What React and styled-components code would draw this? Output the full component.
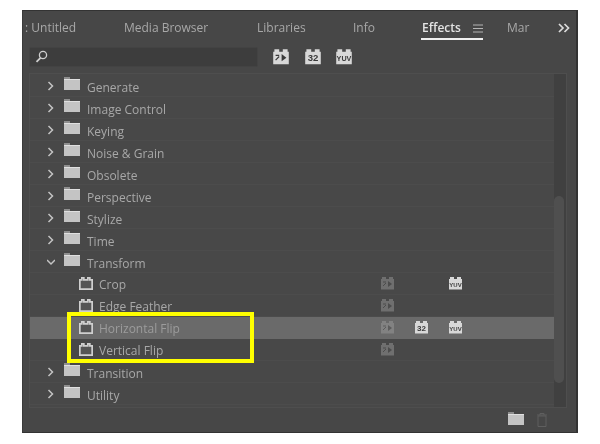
import React from "react";
import styled, { createGlobalStyle } from "styled-components";

const GlobalStyle = createGlobalStyle`
  html, body {
    margin: 0;
    height: 100%;
    background: #fff;
  }
  body {
    font-family: "Open Sans", "Noto Sans", sans-serif;
    -webkit-font-smoothing: antialiased;
  }
  * { box-sizing: border-box; }
`;

const Page = styled.div`
  width: 600px;
  height: 444px;
  padding: 10px 22px 11px 22px;
`;

const Panel = styled.div`
  position: relative;
  width: 556px;
  height: 423px;
  background: #474747;
  border-top: 1px solid #333;
  border-left: 1px solid #3a3a3a;
  border-right: 2px solid #333;
  border-bottom: 1px solid #333;
  display: flex;
  flex-direction: column;
`;

const Blur = styled.div`
  display: flex;
  flex-direction: column;
  flex: 1;
  min-height: 0;
  filter: blur(0.4px);
`;

const Tabs = styled.div`
  display: flex;
  height: 30px;
  align-items: center;
  position: relative;
  font-size: 12px;
`;

const Tab = styled.div`
  position: absolute;
  left: ${(p) => p.$x}px;
  top: 9px;
  line-height: 16px;
  white-space: nowrap;
  color: ${(p) => (p.$active ? "#e4e4e4" : "#a8a8a8")};
  font-weight: ${(p) => (p.$active ? 600 : 400)};
`;

const Underline = styled.div`
  position: absolute;
  left: 398px;
  top: 27px;
  width: 62px;
  height: 2px;
  background: #f0f0f0;
`;

const MenuBars = styled.svg`
  position: absolute;
  left: 450px;
  top: 13px;
`;

const More = styled.svg`
  position: absolute;
  left: 535px;
  top: 12px;
`;

const SearchRow = styled.div`
  display: flex;
  align-items: center;
  gap: 14px;
  height: 20px;
  margin: 6px 0 0 6px;
`;

const SearchBox = styled.div`
  width: 229px;
  height: 20px;
  background: #3d3d3d;
  border: 1px solid #434343;
  border-radius: 2px;
  display: flex;
  align-items: center;
  padding-left: 5px;
`;

const BadgeRow = styled.div`
  display: flex;
  gap: 13.5px;
`;

const ListBox = styled.div`
  display: flex;
  margin: 6px 9px 0 6px;
  height: 336px;
  border: 1px solid #4e4e4e;
  background: #484848;
`;

const List = styled.div`
  flex: 1;
  padding-top: 1px;
`;

const Row = styled.div`
  display: flex;
  align-items: center;
  height: 22px;
  padding-left: ${(p) => (p.$child ? 49 : 17)}px;
  background: ${(p) => (p.$selected ? "#6a6a6a" : "transparent")};
  border-bottom: 1px solid ${(p) => (p.$selected ? "#6a6a6a" : "#4c4c4c")};
`;

const Chevron = styled.svg`
  width: 8px;
  height: 10px;
  margin: 1px 9px 0 0;
  flex: none;
`;

const Label = styled.span`
  font-size: 12px;
  color: ${(p) => (p.$dim ? "#9c9c9c" : "#a8a8a8")};
  margin-left: ${(p) => (p.$child ? 6 : 7)}px;
  padding-top: ${(p) => (p.$child ? 2 : 4)}px;
  white-space: nowrap;
`;

const Badges = styled.div`
  position: absolute;
  left: 301px;
  display: flex;
`;

const BadgeSlot = styled.div`
  width: 34px;
  height: 14px;
  display: flex;
  align-items: center;
`;

const RowInner = styled.div`
  position: relative;
  flex: 1;
  display: flex;
  align-items: center;
  height: 100%;
`;

const RowWrap = styled.div`
  position: relative;
  width: 524px;
`;

const Track = styled.div`
  width: 12px;
  background: #404040;
  padding: 122px 2px 24px 0;
  display: flex;
`;

const Thumb = styled.div`
  flex: 1;
  background: #4f4f4f;
  border-radius: 5px;
`;

const Footer = styled.div`
  display: flex;
  justify-content: flex-end;
  align-items: center;
  gap: 12px;
  height: 24px;
  padding-right: 28px;
`;

const Outline = styled.div`
  position: absolute;
  left: 44px;
  top: 301px;
  width: 187px;
  height: 51px;
  border: 4px solid #ffff00;
`;

function Badge({ kind, faded, onSelected, size = 15 }) {
  const fill = faded ? (onSelected ? "#828282" : "#6f6f6f") : "#d8d8d8";
  const ink = faded ? (onSelected ? "#5c5c5c" : "#4c4c4c") : "#3a3a3a";
  return (
    <svg width={size} height={size - 1} viewBox="0 0 15 14">
      <path d="M1 3h1V1h4v2h3V1h4v2h1v10.5H1z" fill={fill} />
      {kind === "fx" && <path d="M8 5l4 3-4 3z" fill={ink} />}
      {kind === "fx" && <path d="M3 6h3M3 10l3-3" stroke={ink} strokeWidth="1" fill="none" />}
      {kind === "32" && (
        <text x="7.5" y="11" textAnchor="middle" fontSize="8" fontWeight="700" fontFamily="Liberation Sans" fill={ink}>
          32
        </text>
      )}
      {kind === "yuv" && (
        <text x="7.5" y="10.5" textAnchor="middle" fontSize="6" fontWeight="700" fontFamily="Liberation Sans" fill={ink}>
          YUV
        </text>
      )}
    </svg>
  );
}

function FolderIcon() {
  return (
    <svg width="16" height="13" viewBox="0 0 16 13" style={{ flex: "none", marginTop: -3 }}>
      <path d="M0 0h6v2H0z" fill="#8e8e8e" />
      <path d="M0 2h16v11H0z" fill="#c4c4c4" />
      <path d="M0 2h16v1H0z" fill="#e0e0e0" />
    </svg>
  );
}

function EffectIcon() {
  return (
    <svg width="14" height="13" viewBox="0 0 14 13" style={{ flex: "none" }}>
      <path d="M.85 2.85h2v-2h2v2h4v-2h2v2h2.3v9.3H.85z" fill="#555" stroke="#cfcfcf" strokeWidth="1.7" />
    </svg>
  );
}

const folders1 = ["Generate", "Image Control", "Keying", "Noise & Grain", "Obsolete", "Perspective", "Stylize", "Time"];
const effects = [
  { name: "Crop", badges: ["fx", null, "yuv"] },
  { name: "Edge Feather", badges: ["fx"] },
  { name: "Horizontal Flip", badges: ["fx", "32", "yuv"], selected: true },
  { name: "Vertical Flip", badges: ["fx"] },
];

function FolderRow({ name, open }) {
  return (
    <Row>
      <Chevron viewBox="0 0 8 10">
        {open ? (
          <path d="M0 3l4 4 4-4" fill="none" stroke="#c4c4c4" strokeWidth="1.5" />
        ) : (
          <path d="M1.5 1l4 4-4 4" fill="none" stroke="#c4c4c4" strokeWidth="1.5" />
        )}
      </Chevron>
      <FolderIcon />
      <Label>{name}</Label>
    </Row>
  );
}

export default function App() {
  return (
    <Page>
      <GlobalStyle />
      <Panel>
        <Blur>
          <Tabs>
            <Tab $x={2}>: Untitled</Tab>
            <Tab $x={101}>Media Browser</Tab>
            <Tab $x={234}>Libraries</Tab>
            <Tab $x={330}>Info</Tab>
            <Tab $x={399} $active>Effects</Tab>
            <MenuBars width="10" height="9" viewBox="0 0 10 9">
              <path d="M0 1h10M0 4.5h10M0 8h10" stroke="#b5b5b5" strokeWidth="1" />
            </MenuBars>
            <Underline />
            <Tab $x={484}>Mar</Tab>
            <More width="12" height="10" viewBox="0 0 12 10">
              <path d="M1 1l4 4-4 4M6.5 1l4 4-4 4" fill="none" stroke="#dcdcdc" strokeWidth="1.7" />
            </More>
          </Tabs>
          <SearchRow>
            <SearchBox>
              <svg width="13" height="13" viewBox="0 0 13 13">
                <circle cx="8" cy="5" r="3.6" fill="none" stroke="#cfcfcf" strokeWidth="1.3" />
                <path d="M5.5 7.8L1.5 11.8" stroke="#cfcfcf" strokeWidth="1.8" />
              </svg>
            </SearchBox>
            <BadgeRow>
              <Badge kind="fx" size={18} />
              <Badge kind="32" size={18} />
              <Badge kind="yuv" size={18} />
            </BadgeRow>
          </SearchRow>
          <ListBox>
            <List>
              <RowWrap>
                {folders1.map((name) => (
                  <FolderRow key={name} name={name} />
                ))}
                <FolderRow name="Transform" open />
                {effects.map((fx) => (
                  <Row key={fx.name} $child $selected={fx.selected}>
                    <RowInner>
                      <EffectIcon />
                      <Label $child $dim={fx.selected}>{fx.name}</Label>
                      <Badges>
                        {fx.badges.map((kind, i) => (
                          <BadgeSlot key={i}>
                            {kind && <Badge kind={kind} faded={kind === "fx"} onSelected={fx.selected} />}
                          </BadgeSlot>
                        ))}
                      </Badges>
                    </RowInner>
                  </Row>
                ))}
                <FolderRow name="Transition" />
                <FolderRow name="Utility" />
              </RowWrap>
            </List>
            <Track>
              <Thumb />
            </Track>
          </ListBox>
          <Footer>
            <FolderIcon />
            <svg width="12" height="14" viewBox="0 0 12 14">
              <path d="M1 2h10M4 2V.5h4V2M2 3h8v10.5H2z" fill="none" stroke="#5f5f5f" strokeWidth="1" />
            </svg>
          </Footer>
        </Blur>
        <Outline />
      </Panel>
    </Page>
  );
}
